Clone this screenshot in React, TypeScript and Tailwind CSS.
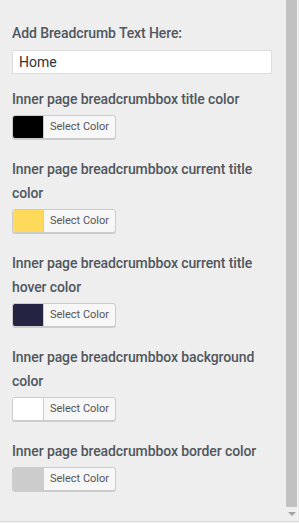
import React from 'react';

const fields = [
  { label: 'Inner page breadcrumbbox title color', color: '#000000' },
  { label: 'Inner page breadcrumbbox current title color', color: '#ffda5a' },
  { label: 'Inner page breadcrumbbox current title hover color', color: '#242442' },
  { label: 'Inner page breadcrumbbox background color', color: '#ffffff' },
  { label: 'Inner page breadcrumbbox border color', color: '#cccccc' },
];

const ColorButton = ({ color }: { color: string }) => (
  <button className="flex h-6 w-[104px] overflow-hidden rounded-[3px] border border-[#cccccc] bg-[#f7f7f7] shadow-[0_1px_0_#cccccc]">
    <span className="h-full w-[31px] border-r border-[#cccccc]" style={{ backgroundColor: color }} />
    <span className="flex-1 pt-[3px] text-center text-[11px] leading-4 text-[#555555]">Select Color</span>
  </button>
);

export default function App() {
  return (
    <div className="flex h-[523px] w-[299px] flex-col bg-[#eeeeee] font-['Roboto',sans-serif]">
      <div className="flex min-h-0 flex-1">
        {/* Panel content */}
        <div className="flex-1 overflow-hidden pl-3 pr-[15px] pt-[21px]">
          <div className="text-[14px] font-medium leading-6 tracking-[-0.1px] text-[#50575e]">Add Breadcrumb Text Here:</div>
          <input
            defaultValue="Home"
            className="mt-[5px] block h-6 w-[260px] border border-[#dddddd] bg-white px-[6px] text-[14px] text-[#333333] outline-none"
          />
          <div className="mt-[13px] flex flex-col gap-[18px]">
            {fields.map((f) => (
              <div key={f.label}>
                <div className="mb-1 text-[14px] font-medium leading-6 tracking-[-0.1px] text-[#50575e]">{f.label}</div>
                <ColorButton color={f.color} />
              </div>
            ))}
          </div>
        </div>

        {/* Scrollbar */}
        <div className="flex w-[11px] flex-col">
          <div className="flex-1 bg-[#c1c1c1]" />
          <div className="flex h-[14px] items-center justify-center bg-[#eeeeee]">
            <span className="block h-0 w-0 border-x-[4px] border-t-[4px] border-x-transparent border-t-[#a3a3a3]" />
          </div>
        </div>
        <div className="w-[2px] border-l border-[#f7f7f7] bg-[#e6e6e6]" />
      </div>
      <div className="h-[2px] border-t border-[#dcdcdc] bg-[#f5f5f5]" />
    </div>
  );
}
